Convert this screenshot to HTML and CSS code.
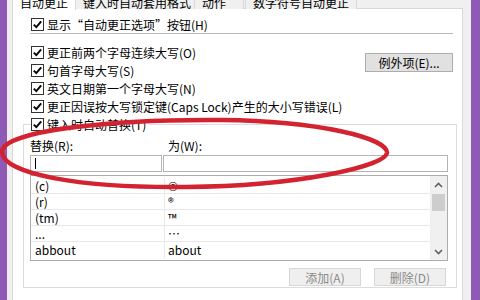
FILE: index.html
```html
<!DOCTYPE html>
<html lang="zh-CN">
<head>
<meta charset="utf-8">
<title>自动更正</title>
<link rel="stylesheet" href="styles.css">
</head>
<body>
<div class="screen">
  <div class="edge edge-l"></div>
  <div class="dlg">
    <div class="tabs">
      <div class="tab active">自动更正</div>
      <div class="tab">键入时自动套用格式</div>
      <div class="tab">动作</div>
      <div class="tab">数字符号自动更正</div>
    </div>
    <div class="panel">
      <div class="chk first">
        <svg class="cb" viewBox="0 0 13 13"><rect x="0.5" y="0.5" width="12" height="12" fill="#fff" stroke="#333"/><path d="M2.8 6.6 L5.3 9.2 L10.2 3.4" stroke="#000" stroke-width="1.9" fill="none"/></svg>
        <span>显示“自动更正选项”按钮(H)</span>
      </div>
      <div class="sep"></div>
      <div class="opts">
        <div class="optlist">
          <div class="chk">
            <svg class="cb" viewBox="0 0 13 13"><rect x="0.5" y="0.5" width="12" height="12" fill="#fff" stroke="#333"/><path d="M2.8 6.6 L5.3 9.2 L10.2 3.4" stroke="#000" stroke-width="1.9" fill="none"/></svg>
            <span>更正前两个字母连续大写(O)</span>
          </div>
          <div class="chk">
            <svg class="cb" viewBox="0 0 13 13"><rect x="0.5" y="0.5" width="12" height="12" fill="#fff" stroke="#333"/><path d="M2.8 6.6 L5.3 9.2 L10.2 3.4" stroke="#000" stroke-width="1.9" fill="none"/></svg>
            <span>句首字母大写(S)</span>
          </div>
          <div class="chk">
            <svg class="cb" viewBox="0 0 13 13"><rect x="0.5" y="0.5" width="12" height="12" fill="#fff" stroke="#333"/><path d="M2.8 6.6 L5.3 9.2 L10.2 3.4" stroke="#000" stroke-width="1.9" fill="none"/></svg>
            <span>英文日期第一个字母大写(N)</span>
          </div>
          <div class="chk">
            <svg class="cb" viewBox="0 0 13 13"><rect x="0.5" y="0.5" width="12" height="12" fill="#fff" stroke="#333"/><path d="M2.8 6.6 L5.3 9.2 L10.2 3.4" stroke="#000" stroke-width="1.9" fill="none"/></svg>
            <span>更正因误按大写锁定键(Caps Lock)产生的大小写错误(L)</span>
          </div>
        </div>
        <div class="btn btn-exc">例外项(E)...</div>
      </div>
      <fieldset class="group">
        <legend class="chk legend">
          <svg class="cb" viewBox="0 0 13 13"><rect x="0.5" y="0.5" width="12" height="12" fill="#fff" stroke="#333"/><path d="M2.8 6.6 L5.3 9.2 L10.2 3.4" stroke="#000" stroke-width="1.9" fill="none"/></svg>
          <span>键入时自动替换(T)</span>
        </legend>
        <div class="repl">
          <div class="lbl">替换(R):</div>
          <div class="lbl lbl2">为(W):</div>
          <div class="inp"><span class="caret"></span></div>
          <div class="inp"></div>
        </div>
        <div class="list">
          <div class="rows">
            <div class="row"><span class="c1">(c)</span><span class="c2">©</span></div>
            <div class="row"><span class="c1">(r)</span><span class="c2">®</span></div>
            <div class="row"><span class="c1">(tm)</span><span class="c2">™</span></div>
            <div class="row"><span class="c1">...</span><span class="c2">…</span></div>
            <div class="row"><span class="c1">abbout</span><span class="c2">about</span></div>
          </div>
          <div class="sb">
            <div class="arrow"><svg viewBox="0 0 9 6" width="9" height="6"><path d="M1 5 L4.5 1.5 L8 5" stroke="#606060" stroke-width="1.6" fill="none"/></svg></div>
            <div class="thumb"></div>
            <div class="track"></div>
            <div class="arrow"><svg viewBox="0 0 9 6" width="9" height="6"><path d="M1 1 L4.5 4.5 L8 1" stroke="#606060" stroke-width="1.6" fill="none"/></svg></div>
          </div>
        </div>
        <div class="actions">
          <div class="btn btn-dis">添加(A)</div>
          <div class="btn btn-dis">删除(D)</div>
        </div>
      </fieldset>
    </div>
  </div>
  <div class="edge edge-r"></div>
  <svg class="mark" viewBox="0 0 480 300" width="480" height="300">
    <path d="M2 152 C1 131 110 119 222 120 C318 121 388 138 387 153 C385 166 300 186 186 187 C78 188 3 174 2 152 Z" fill="none" stroke="#d42330" stroke-width="4.5" stroke-linejoin="round"/>
  </svg>
</div>
</body>
</html>
```
FILE: styles.css
```css
html, body {
  margin: 0;
  padding: 0;
}
body {
  width: 480px;
  height: 300px;
  overflow: hidden;
  font-family: "Noto Sans CJK SC", "Liberation Sans", sans-serif;
  font-size: 12px;
  color: #000;
}
.screen {
  position: relative;
  display: flex;
  width: 480px;
  height: 300px;
  background: #f0f0f0;
  overflow: hidden;
}
.edge {
  background: #8e5ab6;
}
.edge-l {
  width: 7px;
}
.edge-r {
  width: 9px;
}
.dlg {
  flex: 1;
  margin: 0 8px 0 5px;
  display: flex;
  flex-direction: column;
  min-width: 0;
}
.tabs {
  display: flex;
  height: 20px;
  margin-top: -11px;
  position: relative;
  z-index: 1;
}
.tab {
  height: 19px;
  line-height: 26px;
  padding: 0 7px;
  border: 1px solid #d9d9d9;
  border-bottom: none;
  background: #f0f0f0;
  margin-left: -1px;
  white-space: nowrap;
}
.tab.active {
  height: 20px;
  background: #fff;
  margin-left: 0;
  padding: 0 7px 0 7px;
  line-height: 26px;
  z-index: 2;
}
.tab:nth-child(2) {
  width: 104px;
}
.tab:nth-child(3) {
  width: 34px;
}
.tab:nth-child(4) {
  width: 96px;
  margin-left: 1px;
}
.panel {
  flex: 1;
  background: #fff;
  border: 1px solid #d9d9d9;
  border-bottom: none;
  margin-top: -1px;
  display: flex;
  flex-direction: column;
}
.chk {
  display: flex;
  align-items: center;
  height: 18px;
  padding-left: 18px;
  white-space: nowrap;
}
.cb {
  width: 13px;
  height: 13px;
  flex: none;
  margin-right: 3px;
}
.first {
  margin-top: 6px;
}
.sep {
  height: 0;
  border-top: 1px solid #b9b9b9;
  margin: 0 9px 0 17px;
}
.opts {
  display: flex;
  margin-top: 9px;
}
.optlist {
  flex: 1;
}
.btn {
  display: flex;
  align-items: center;
  justify-content: center;
  height: 17px;
  box-sizing: border-box;
  white-space: nowrap;
}
.btn-exc {
  width: 88px;
  height: 19px;
  margin: 10px 9px 0 0;
  background: #e1e1e1;
  border: 1px solid #adadad;
}
.group {
  margin: 0 5px 0 10px;
  padding: 5px 8px 1px 6px;
  border: 1px solid #dcdcdc;
  min-width: 0;
}
.legend {
  padding: 0 3px 0 0;
  margin-left: 1px;
  background: #fff;
}
.repl {
  display: grid;
  grid-template-columns: 132px 1fr;
  column-gap: 1px;
}
.lbl {
  height: 16px;
  line-height: 16px;
  margin-bottom: 1px;
}
.lbl2 {
  padding-left: 5px;
}
.inp {
  height: 17px;
  box-sizing: border-box;
  border: 1px solid #b4b4b4;
  background: #fff;
  position: relative;
}
.caret {
  display: block;
  width: 1px;
  height: 11px;
  background: #000;
  margin: 2px 0 0 4px;
}
.list {
  display: flex;
  margin-top: 3px;
  height: 86px;
  box-sizing: border-box;
  border: 1px solid #acacac;
}
.rows {
  flex: 1;
  padding-top: 2px;
}
.row {
  display: grid;
  grid-template-columns: 134px 1fr;
  height: 16px;
  line-height: 16px;
  border-bottom: 1px solid #e8e8e8;
  box-sizing: border-box;
}
.row:last-child {
  border-bottom: none;
}
.c1 {
  padding-left: 4px;
  border-right: 1px solid #e8e8e8;
}
.c2 {
  padding-left: 3px;
}
.sb {
  width: 17px;
  background: #f0f0f0;
  display: flex;
  flex-direction: column;
}
.arrow {
  height: 17px;
  display: flex;
  align-items: center;
  justify-content: center;
}
.thumb {
  height: 17px;
  margin: 1px 2px 0 2px;
  background: #cdcdcd;
}
.track {
  flex: 1;
}
.actions {
  display: flex;
  justify-content: flex-end;
  gap: 13px;
  margin-top: 7px;
  padding-right: 2px;
}
.btn-dis {
  width: 72px;
  height: 18px;
  background: #efefef;
  border: 1px solid #d6d6d6;
  color: #8a8a8a;
}
.mark {
  position: absolute;
  left: 0;
  top: 0;
  pointer-events: none;
}
```
